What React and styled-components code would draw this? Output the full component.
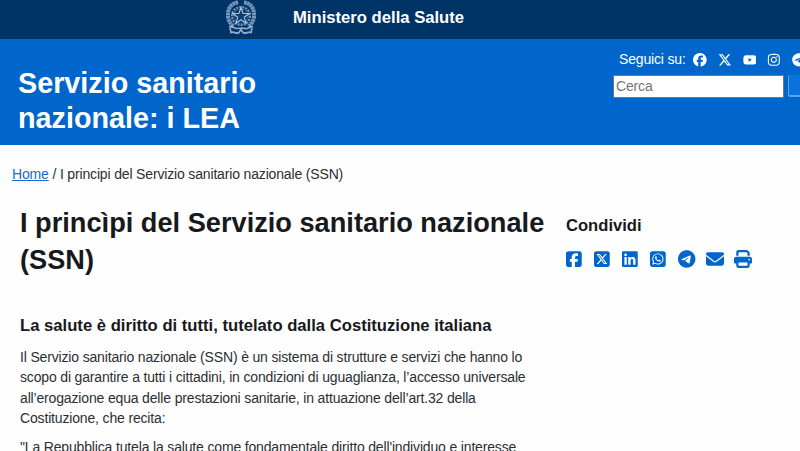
import React from 'react';
import styled, { createGlobalStyle } from 'styled-components';
import {
  FaEnvelope,
  FaFacebook,
  FaInstagram,
  FaLinkedin,
  FaPrint,
  FaSquareFacebook,
  FaSquareWhatsapp,
  FaSquareXTwitter,
  FaTelegram,
  FaXTwitter,
  FaYoutube,
} from 'react-icons/fa6';

const SOCIALS = [FaFacebook, FaXTwitter, FaYoutube, FaInstagram, FaTelegram];
const SHARES = [
  FaSquareFacebook,
  FaSquareXTwitter,
  FaLinkedin,
  FaSquareWhatsapp,
  FaTelegram,
  FaEnvelope,
  FaPrint,
];

function Emblem() {
  return (
    <EmblemSvg viewBox="0 0 32 36" fill="none" stroke="#a9c3df">
      <circle cx="16" cy="16" r="9" strokeWidth="2.2" strokeDasharray="2 1.1" opacity="0.7" />
      <circle cx="16" cy="16" r="7.2" strokeWidth="0.6" opacity="0.6" />
      <path
        d="M16 7.5l2.1 5.9 6.2.1-5 3.8 1.8 6-5.1-3.5-5.1 3.5 1.8-6-5-3.8 6.2-.1z"
        fill="#0d3d70"
        strokeWidth="1.2"
      />
      <path
        d="M13 2.5C6 3 2.5 9 3 16c.4 5 2 8 6 10.5"
        strokeWidth="4"
        strokeDasharray="2.6 .5"
        opacity="0.7"
      />
      <path
        d="M19 2.5c7 .5 10.5 6.5 10 13.5-.4 5-2 8-6 10.5"
        strokeWidth="4"
        strokeDasharray="2.6 .5"
        opacity="0.7"
      />
      <path
        d="M4 27c3-1.5 5 1.5 8 1.5s5-1 8 0 5-3 8-1.5M5 28l1 4.5c3-2 5 2.5 8 0l2-3 2 3c3 2.5 5-2 8 0l1-4.5"
        strokeWidth="1.7"
        opacity="0.85"
      />
    </EmblemSvg>
  );
}

export default function App() {
  return (
    <>
      <GlobalStyle />
      <TopBar>
        <Emblem />
        <Ministry>Ministero della Salute</Ministry>
      </TopBar>
      <Header>
        <SiteTitle>
          Servizio sanitario
          <br />
          nazionale: i LEA
        </SiteTitle>
        <Tools>
          <Socials>
            <span>Seguici su:</span>
            {SOCIALS.map((Icon, i) => (
              <Icon key={i} />
            ))}
          </Socials>
          <SearchForm>
            <SearchInput placeholder="Cerca" />
            <SearchButton type="button" aria-label="Cerca" />
          </SearchForm>
        </Tools>
      </Header>
      <Breadcrumb>
        <a href="#home">Home</a> / I principi del Servizio sanitario nazionale (SSN)
      </Breadcrumb>
      <Main>
        <Article>
          <Title>
            I princìpi del Servizio sanitario nazionale
            <br />
            (SSN)
          </Title>
          <Subtitle>La salute è diritto di tutti, tutelato dalla Costituzione italiana</Subtitle>
          <Paragraph>
            Il Servizio sanitario nazionale (SSN) è un sistema di strutture e servizi che hanno lo
            <br />
            scopo di garantire a tutti i cittadini, in condizioni di uguaglianza, l’accesso universale
            <br />
            all’erogazione equa delle prestazioni sanitarie, in attuazione dell’art.32 della
            <br />
            Costituzione, che recita:
          </Paragraph>
          <Paragraph>
            "La Repubblica tutela la salute come fondamentale diritto dell'individuo e interesse
          </Paragraph>
        </Article>
        <Share>
          <ShareTitle>Condividi</ShareTitle>
          <ShareIcons>
            {SHARES.map((Icon, i) => (
              <Icon key={i} preserveAspectRatio="xMinYMid meet" />
            ))}
          </ShareIcons>
        </Share>
      </Main>
    </>
  );
}

const GlobalStyle = createGlobalStyle`
  * {
    box-sizing: border-box;
  }
  html, body {
    margin: 0;
    height: 451px;
    overflow: hidden;
  }
  body {
    background: #fefefe;
    color: #2b2f33;
    font: 14px/20.5px 'Liberation Sans', Arial, sans-serif;
    letter-spacing: -0.16px;
  }
  h1, h2, h3, p {
    margin: 0;
    letter-spacing: 0;
    white-space: nowrap;
  }
`;

const TopBar = styled.div`
  display: flex;
  height: 39px;
  padding-left: 225px;
  background: #003366;
`;

const EmblemSvg = styled.svg`
  width: 32px;
  height: 36px;
`;

const Ministry = styled.div`
  margin: 8px 0 0 36px;
  color: #fff;
  font-size: 16.65px;
  font-weight: bold;
  letter-spacing: 0;
`;

const Header = styled.header`
  display: flex;
  justify-content: space-between;
  height: 105.5px;
  background: #0066cc;
  color: #fff;
`;

const SiteTitle = styled.h2`
  padding: 27px 0 0 18px;
  font-size: 28.75px;
  line-height: 35px;
`;

const Tools = styled.div`
  flex: none;
  width: 187px;
  padding-top: 11px;
`;

const Socials = styled.div`
  display: flex;
  align-items: center;
  gap: 11px;
  height: 20px;
  padding-left: 6px;

  span {
    margin-right: -3.5px;
    padding-bottom: 1px;
    white-space: nowrap;
  }
  svg {
    flex: none;
    width: auto;
    height: 13.7px;
  }
`;

const SearchForm = styled.form`
  display: flex;
  gap: 4px;
  margin-top: 5px;
`;

const SearchInput = styled.input`
  flex: none;
  width: 171px;
  height: 23px;
  padding: 0 2px 2px;
  border: 1px solid #767676;
  background: #fff;
  font: 14px 'Liberation Sans', Arial, sans-serif;
  letter-spacing: -0.16px;

  &::placeholder {
    color: #757575;
  }
`;

const SearchButton = styled.button`
  flex: none;
  width: 40px;
  height: 22px;
  border: solid #5fa3e6;
  border-width: 0 0 2px 1px;
  border-radius: 2px;
  background: #0873e0;
`;

const Breadcrumb = styled.nav`
  padding: 19.5px 0 0 12px;

  a {
    color: #1a6cc8;
  }
`;

const Main = styled.main`
  display: flex;
  padding: 19px 0 0 20px;
`;

const Article = styled.article`
  flex: none;
  width: 546px;
`;

const Title = styled.h1`
  color: #17191c;
  font-size: 27.2px;
  line-height: 37px;
`;

const Subtitle = styled.h3`
  margin: 37px 0 10px;
  color: #17191c;
  font-size: 16.65px;
  line-height: 22px;
`;

const Paragraph = styled.p`
  margin-bottom: 8.5px;
  letter-spacing: -0.16px;
`;

const Share = styled.aside`
  padding-top: 11px;
`;

const ShareTitle = styled.h3`
  color: #17191c;
  font-size: 16.6px;
  line-height: 22px;
`;

const ShareIcons = styled.div`
  display: grid;
  grid-template-columns: repeat(7, 28px);
  margin-top: 13px;
  color: #0066cc;
  font-size: 18px;
`;
